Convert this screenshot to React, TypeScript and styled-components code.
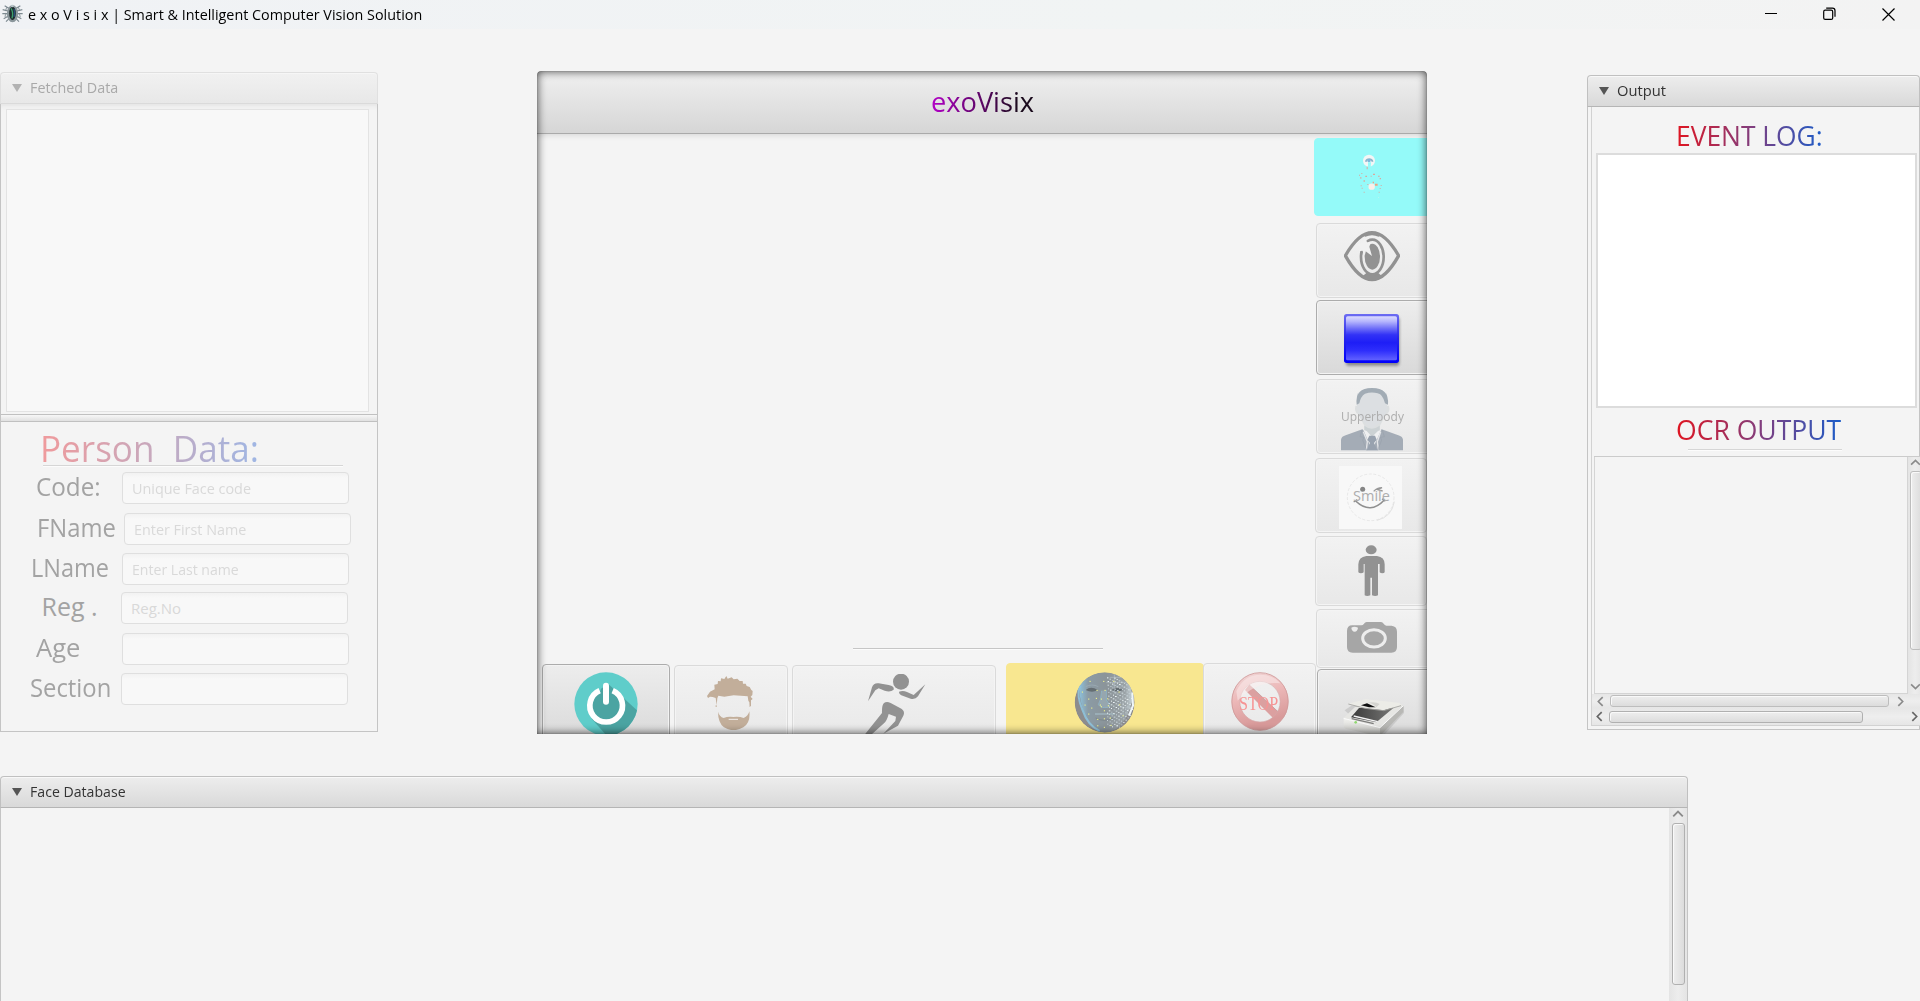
import React, { useLayoutEffect, useRef, useState } from "react";
import styled, { createGlobalStyle, css } from "styled-components";

const Global = createGlobalStyle`
  * { box-sizing: border-box; }
  body {
    margin: 0;
    background: #f4f4f4;
    overflow: hidden;
    font-family: "Open Sans", "Noto Sans", sans-serif;
    color: #333;
  }
  svg { display: block; flex: none; }
`;

/* ---------- text helpers ---------- */

const FitBox = styled.span<{ $width: number }>`
  display: block;
  flex: none;
  width: ${(p) => p.$width}px;
  white-space: pre;
`;
const FitInner = styled.span<{ $gradient?: string }>`
  display: inline-block;
  transform-origin: 0 50%;
  ${(p) =>
    p.$gradient &&
    css`
      background: ${p.$gradient};
      background-clip: text;
      -webkit-background-clip: text;
      color: transparent;
    `}
`;

/* Condenses a label horizontally so that it fills the given width. */
function Fit({ width, gradient, children }: { width: number; gradient?: string; children: string }) {
  const ref = useRef<HTMLSpanElement>(null);
  const [scale, setScale] = useState(1);
  useLayoutEffect(() => {
    if (ref.current) setScale(width / ref.current.offsetWidth);
  }, [width, children]);
  return (
    <FitBox $width={width}>
      <FitInner ref={ref} $gradient={gradient} style={{ transform: `scaleX(${scale})` }}>
        {children}
      </FitInner>
    </FitBox>
  );
}

/* ---------- window ---------- */

const Window = styled.div`
  display: flex;
  flex-direction: column;
  width: 1920px;
  height: 1001px;
  overflow: hidden;
  background: #f4f4f4;
`;
const TitleBar = styled.header`
  display: flex;
  align-items: center;
  flex: none;
  height: 29px;
  padding-left: 2px;
  background: linear-gradient(90deg, #f0f2f5, #f1f4f4 60%, #f3f3f3);
  color: #000;
  font-size: 15px;
  line-height: 28px;
`;
const TitleText = styled.div`
  margin: 0 auto 0 5px;
  padding-bottom: 2px;
`;
const Controls = styled.div`
  display: flex;
  gap: 46px;
  padding: 0 25px 1px 0;
`;
const Body = styled.main`
  display: flex;
  flex-direction: column;
  flex: 1;
`;
const Upper = styled.div`
  display: flex;
  align-items: flex-start;
  height: 747px;
`;

/* ---------- titled panes ---------- */

const PaneHead = styled.div<{ $muted?: boolean }>`
  display: flex;
  align-items: center;
  gap: 8.5px;
  flex: none;
  height: 32px;
  padding: 0 0 1px 10.5px;
  border: 1px solid ${(p) => (p.$muted ? "#e0e0e0" : "#c0c0c0")};
  border-bottom-color: ${(p) => (p.$muted ? "#dadada" : "#b5b5b5")};
  border-radius: 4px 4px 0 0;
  background: ${(p) =>
    p.$muted ? "linear-gradient(#f1f1f1, #e8e8e8)" : "linear-gradient(#ededed, #d9d9d9)"};
  box-shadow: inset 0 1px 0 ${(p) => (p.$muted ? "#f6f6f6" : "#f8f8f8")};
  color: ${(p) => (p.$muted ? "#a9a9a9" : "#333")};
  font-size: 15px;
  line-height: 29px;
`;
const Arrow = styled.i<{ $muted?: boolean }>`
  width: 0;
  height: 0;
  border: 5.5px solid transparent;
  border-top: 8px solid ${(p) => (p.$muted ? "#b2b2b2" : "#555")};
  border-bottom: 0;
`;

const DataPane = styled.section`
  display: flex;
  flex-direction: column;
  flex: none;
  width: 378px;
  height: 660px;
  margin-top: 43px;
`;
const DataBody = styled.div`
  flex: 1;
  border: 1px solid #c4c4c4;
  border-top: 0;
  box-shadow: inset 0 6px 5px -4px #e4e4e4;
`;
const FaceList = styled.div`
  width: 363px;
  height: 303px;
  margin: 5px 0 2px 5px;
  border: 1px solid #e3e3e3;
  background: #f8f8f8;
`;
const Divider = styled.div`
  height: 8px;
  border: solid #c0c0c0;
  border-width: 1px 0;
  background: linear-gradient(#f7f7f7, #e0e0e0);
`;
const PersonTitle = styled.h2`
  margin: 6px 0 0 39px;
  height: 37px;
  font-size: 37px;
  font-weight: 400;
  line-height: 40px;
`;
const Rule = styled.hr<{ $width: number; $left: number; $top?: number; $dark?: boolean }>`
  flex: none;
  width: ${(p) => p.$width}px;
  height: 2px;
  margin: ${(p) => p.$top ?? 0}px 0 0 ${(p) => p.$left}px;
  border: 0;
  border-top: 1px solid ${(p) => (p.$dark ? "#c6c6c6" : "#d6d6d6")};
  border-bottom: 1px solid #fcfcfc;
`;
const Row = styled.label<{ $top: number; $left: number }>`
  display: flex;
  height: 32px;
  margin: ${(p) => p.$top}px 0 0 ${(p) => p.$left}px;
`;
const RowLabel = styled.span<{ $width: number }>`
  flex: none;
  width: ${(p) => p.$width}px;
  color: #a3a3a3;
  font-size: 25px;
  line-height: 29px;
`;
const Field = styled.div`
  width: 227px;
  height: 32px;
  padding-left: 9px;
  border: 1px solid #dfdfdf;
  border-radius: 4px;
  background: linear-gradient(#f2f2f2, #f8f8f8 5px);
  color: #d9d9d9;
  font-size: 15px;
  line-height: 31px;
`;

/* ---------- camera pane ---------- */

const CameraPane = styled.section`
  position: relative;
  display: flex;
  flex-direction: column;
  flex: none;
  width: 890px;
  height: 663px;
  margin: 42px 0 0 159px;
  border-radius: 4px 4px 0 0;
  overflow: hidden;
  &::after {
    content: "";
    position: absolute;
    inset: 0;
    border-radius: 4px 4px 0 0;
    box-shadow: inset 0 0 10px rgba(0, 0, 0, 0.75), inset 0 0 1px rgba(0, 0, 0, 0.6);
    pointer-events: none;
  }
`;
const CameraHead = styled.div`
  flex: none;
  display: flex;
  justify-content: center;
  height: 63px;
  padding-left: 1px;
  border-bottom: 1px solid #aaa;
  background: linear-gradient(#f0f0f0, #d6d6d6);
  font-size: 28px;
  line-height: 61px;
`;
const CameraBody = styled.div`
  display: flex;
  flex: 1;
  box-shadow: inset 0 6px 5px -4px #dcdcdc;
`;
const Stage = styled.div`
  display: flex;
  flex-direction: column;
  flex: none;
  width: 777px;
`;
const Preview = styled.div`
  height: 514px;
`;
const BottomBar = styled.div`
  display: flex;
  align-items: flex-start;
  width: 779px;
  height: 71px;
  margin-top: 13px;
  overflow: hidden;
`;
const SideBar = styled.div`
  display: flex;
  flex-direction: column;
  width: 113px;
  overflow: hidden;
`;

type Kind = "on" | "off" | "cyan" | "yellow";
const kinds: Record<Kind, ReturnType<typeof css>> = {
  on: css`
    border: 1px solid #acacac;
    background: linear-gradient(#ededed, #d9d9d9);
    box-shadow: inset 0 0 0 1px #f3f3f3;
  `,
  off: css`
    border: 1px solid #dadada;
    background: linear-gradient(#f2f2f2, #e8e8e8);
    box-shadow: inset 0 0 0 1px #f4f4f4;
  `,
  cyan: css`
    border: 1px solid #94faf9;
    background: #94faf9;
  `,
  yellow: css`
    border: 1px solid #f8e790;
    background: #f8e790;
  `,
};
const ToolButton = styled.button<{
  $kind: Kind;
  $w: number;
  $h: number;
  $mt?: number;
  $ml?: number;
  $px: number;
  $py: number;
}>`
  position: relative;
  display: flex;
  align-items: flex-start;
  flex: none;
  width: ${(p) => p.$w}px;
  height: ${(p) => p.$h}px;
  margin: ${(p) => p.$mt ?? 0}px 0 0 ${(p) => p.$ml ?? 0}px;
  padding: ${(p) => p.$py - 1}px 0 0 ${(p) => p.$px - 1}px;
  border-radius: 4px;
  font-family: inherit;
  ${(p) => kinds[p.$kind]}
`;
const Caption = styled.span<{ $x: number; $y: number; $size: number; $color: string; $serif?: boolean }>`
  position: absolute;
  left: ${(p) => p.$x}px;
  top: ${(p) => p.$y}px;
  color: ${(p) => p.$color};
  font-family: ${(p) => (p.$serif ? '"Liberation Serif", serif' : "inherit")};
  font-size: ${(p) => p.$size}px;
  line-height: 20px;
`;

/* ---------- output pane ---------- */

const OutputPane = styled.section`
  flex: none;
  display: flex;
  flex-direction: column;
  width: 333px;
  height: 655px;
  margin: 46px 0 0 160px;
`;
const OutputFrame = styled.div`
  flex: 1;
  padding: 0 0 3px 3px;
  border: solid #c4c4c4;
  border-width: 0 1px 1px 1px;
`;
const OutputBody = styled.div`
  display: flex;
  flex-direction: column;
  height: 100%;
  margin-right: -1px;
  border: solid #d2d2d2;
  border-width: 0 0 1px 1px;
`;
const OutTitle = styled.h3<{ $top: number }>`
  flex: none;
  height: 36px;
  margin: ${(p) => p.$top}px 0 0 84px;
  font-size: 28px;
  font-weight: 400;
  line-height: 36px;
`;
const Log = styled.div`
  flex: none;
  width: 321px;
  height: 255px;
  margin-left: 4px;
  border: 2px solid #dcdcdc;
  background: #fff;
`;
const OcrBox = styled.div`
  display: flex;
  flex: none;
  height: 238px;
  margin: 5px 0 0 2px;
  border-top: 1px solid #cbcbcb;
`;
const OcrText = styled.div`
  flex: none;
  width: 314px;
  border: 1px solid #d4d4d4;
  border-top: 0;
`;
const VBar = styled.div<{ $w: number }>`
  display: flex;
  flex: none;
  flex-direction: column;
  align-items: center;
  width: ${(p) => p.$w}px;
  padding-bottom: 2px;
  overflow: hidden;
  background: linear-gradient(90deg, #e4e4e4, #ededed 50%, #e4e4e4);
`;
const HBar = styled.div<{ $h: number; $pl: number }>`
  display: flex;
  flex: none;
  align-items: center;
  height: ${(p) => p.$h}px;
  padding-left: ${(p) => p.$pl}px;
  background: linear-gradient(#e6e6e6, #eee 50%, #e6e6e6);
`;
const Spring = styled.i`
  flex: 1;
`;
const Gap = styled.i<{ $size: number }>`
  width: ${(p) => p.$size}px;
`;
const Thumb = styled.div<{ $w: number; $h: number; $ml?: number; $mt?: number; $vertical?: boolean; $soft?: boolean }>`
  flex: none;
  width: ${(p) => p.$w}px;
  height: ${(p) => p.$h}px;
  margin: ${(p) => p.$mt ?? 0}px 0 0 ${(p) => p.$ml ?? 0}px;
  border: 1px solid ${(p) => (p.$soft ? "#bdbdbd" : "#b0b0b0")};
  border-radius: 3px;
  background: linear-gradient(${(p) => (p.$vertical ? "90deg" : "180deg")}, #eee, #dcdcdc);
  box-shadow: inset 1px 1px 0 #f9f9f9;
`;

/* ---------- database pane ---------- */

const DatabasePane = styled.section`
  display: flex;
  flex-direction: column;
  width: 1688px;
  height: 225px;
`;
const DatabaseBody = styled.div`
  display: flex;
  justify-content: flex-end;
  flex: 1;
  border: solid #c4c4c4;
  border-width: 0 1px;
`;

/* ---------- icons ---------- */

const turn = { up: 0, right: 90, down: 180, left: 270 };
const Chevron = ({ dir, size = 11, color = "#8a8a8a" }: { dir: keyof typeof turn; size?: number; color?: string }) => (
  <svg width={size} height={size} viewBox="0 0 10 10">
    <path d="M1 7 5 3l4 4" fill="none" stroke={color} strokeWidth="1.5" transform={`rotate(${turn[dir]} 5 5)`} />
  </svg>
);

const BeetleIcon = () => (
  <svg width="21" height="26" viewBox="0 -3 63 78">
    <g stroke="#7d8a91" strokeWidth="3.500" fill="none">
      <path d="M20 16 8 8M18 24 2 20M18 32H1M18 40 5 47M22 46 12 56M43 16l12-8M45 24l16-4M45 32h17M45 40l13 7M41 46l10 10" />
      <path d="M15 12 10 24M48 12l6 12M12 30 9 42M51 30l4 12" opacity=".7" />
    </g>
    <ellipse cx="31.500" cy="32" rx="17" ry="26" fill="#8b979c" />
    <ellipse cx="31.500" cy="31" rx="10" ry="20" fill="#1d2b2c" />
    <path d="M27 16q8 12 3 30" stroke="#3da06e" strokeWidth="4" fill="none" />
    <path d="M36 18q4 12 0 24" stroke="#27507a" strokeWidth="4" fill="none" />
    <circle cx="31" cy="9" r="4" fill="#b8c4c8" />
  </svg>
);

const MinimizeIcon = () => (
  <svg width="14" height="14" viewBox="0 0 14 14">
    <path d="M2 6.500h12" stroke="#000" />
  </svg>
);
const RestoreIcon = () => (
  <svg width="13" height="14" viewBox="0 0 13 14">
    <g fill="none" stroke="#000" strokeWidth="1.200">
      <rect x="0.700" y="3.200" width="9" height="9.200" rx="1.500" />
      <path d="M3.200 1.200h6.300q2.500 0 2.500 2.500v6" />
    </g>
  </svg>
);
const CloseIcon = () => (
  <svg width="13" height="14" viewBox="0 0 13 14">
    <path d="M.5 1.500l12 12M12.500 1.500l-12 12" stroke="#000" strokeWidth="1.200" />
  </svg>
);

const LocateIcon = () => (
  <svg width="26" height="46" viewBox="172 280 78 138">
    <circle cx="208" cy="303" r="18" fill="#f4f6f6" />
    <path d="M198 306a11 11 0 0 1 21 0" fill="none" stroke="#8fb6cc" strokeWidth="5" />
    <circle cx="208" cy="303" r="5" fill="#7db7dc" />
    <path d="M205 308h9l-1 14h-8z" fill="#94faf9" />
    <g fill="#dba79c">
      <path d="M201 321h3v8h-3zM178 345h3v3h-3zM185 340h3v3h-3zM182 352h3v5h-3zM192 361h3v6h-3zM197 348h5v4h-5zM213 348h3v3h-3zM220 342h6v4h-6zM235 348h5v3h-5zM240 355h4v4h-4zM183 377h3v3h-3zM186 384h3v3h-3zM192 396h3v3h-3zM237 396h3v3h-3zM243 376h3v3h-3zM240 385h3v3h-3zM203 373h3v3h-3z" />
      <path d="M219 366h4v5h-4zM226 372h8v6h-8z" fill="#f0a080" />
    </g>
    <circle cx="216" cy="381" r="9.500" fill="#fbefe9" />
    <path d="M235 412h3v3h-3z" fill="#b5f5f2" />
  </svg>
);

const EyeIcon = () => (
  <svg width="56" height="51" viewBox="132 513 168 153">
    <path
      d="M136 587Q176 518 216 518T296 587Q256 659 216 659T136 587Z"
      fill="none"
      stroke="#929292"
      strokeWidth="10"
      strokeLinejoin="round"
    />
    <path d="M186 524q30-18 60 0l-10 6q-20-9-40 0zM184 652q32 20 66 0l-16-14q-17 10-34 0z" fill="#929292" />
    <ellipse cx="217" cy="591" rx="34" ry="52" fill="none" stroke="#929292" strokeWidth="8" />
    <ellipse cx="217" cy="590" rx="23" ry="39" fill="#929292" />
    <path d="M196 532l5 15 12-1-5 14 8 28-19-14-2 10-8-12-10 2 4-11-8-12 13-2z" fill="#f1f1f1" />
  </svg>
);

const BlueIcon = () => (
  <svg width="59" height="56" viewBox="129 759 177 168">
    <defs>
      <linearGradient id="blueFill" x1="0" y1="0" x2="0" y2="1">
        <stop offset="0" stopColor="#dcdcff" />
        <stop offset="0.120" stopColor="#b4b4fd" />
        <stop offset="0.280" stopColor="#6c6cf8" />
        <stop offset="0.420" stopColor="#3232f6" />
        <stop offset="0.600" stopColor="#1e1ef6" />
        <stop offset="0.780" stopColor="#2e2efc" />
        <stop offset="1" stopColor="#6262ff" />
      </linearGradient>
      <linearGradient id="blueEdge" x1="0" y1="0" x2="0" y2="1">
        <stop offset="0" stopColor="#6c6cf2" />
        <stop offset="0.500" stopColor="#2424ea" />
        <stop offset="1" stopColor="#0000fc" />
      </linearGradient>
      <filter id="blueShade" x="-10%" y="-10%" width="130%" height="130%">
        <feGaussianBlur stdDeviation="4" />
      </filter>
    </defs>
    <rect x="138" y="772" width="160" height="145" rx="8" fill="#888" filter="url(#blueShade)" />
    <rect x="132" y="762" width="165" height="147" rx="8" fill="url(#blueEdge)" />
    <rect x="138" y="769" width="153" height="132" rx="5" fill="url(#blueFill)" />
  </svg>
);

const SuitIcon = () => (
  <svg width="62" height="63" viewBox="123 53 186 189">
    <path d="M166 106q-4 20 9 26l18 34v16l23 18 24-18v-16l18-34q14-6 9-26z" fill="#dcdfe0" />
    <path d="M171 70q45-34 90 0v40q-8 44-44 64-38-18-46-64z" fill="#dcdfe2" />
    <path d="M193 166q22 18 46 0v15l-23 18-23-18z" fill="#ccd2d4" />
    <path d="M170 103q-6-50 46-50t48 50l-9-4q-6-26-22-30-18-6-38 1-13 8-17 29z" fill="#a2acb5" />
    <path d="M123 240v-32q2-10 14-13l50-18 29 22 29-22 50 18q12 3 14 13v32z" fill="#a4acb6" />
    <path d="M190 178l26 62 28-62-10 4-18 17-16-17z" fill="#eff0f1" />
    <path d="M208 196h17l5 12-8 10 10 22h-32l10-22-8-10z" fill="#98a2af" />
    <path d="M190 184l12 30-3 24M242 184l-10 30 3 24" stroke="#e3e5e8" strokeWidth="4" fill="none" />
    <path d="M186 179l-6 20 12 2-4 8 12 31M247 179l6 20-12 2 4 8-12 31" stroke="#98a1ac" strokeWidth="2" fill="none" />
  </svg>
);

const SmileIcon = () => (
  <svg width="63" height="63" viewBox="117 288 189 189">
    <path d="M117 288h189v189H117z" fill="#f8f8f8" />
    <circle cx="212" cy="382" r="70" fill="#f8f8f8" stroke="#e0e0e0" strokeWidth="2" strokeDasharray="9 5" />
    <path d="M283 395q-8 46-52 56" stroke="#e2e2e2" strokeWidth="3" fill="none" />
    <path d="M167 393q44 42 86-3" stroke="#8f8f8f" strokeWidth="5" fill="none" />
    <path d="M161 396l11-7M246 386l10 8" stroke="#8f8f8f" strokeWidth="4" />
    <circle cx="188" cy="358" r="7.500" fill="#858585" />
    <path d="M221 364q10-11 25-11l-13 6 15 4" stroke="#999" strokeWidth="4" fill="none" />
  </svg>
);

const PersonIcon = () => (
  <svg width="27" height="51" viewBox="172 524 81 153">
    <ellipse cx="211.500" cy="538.500" rx="16.500" ry="13.500" fill="#929292" />
    <path
      d="M197 557h32q23 3 23 25v24q-2 3-7 3t-8-3v-25h-5v94q-8 4-18 0v-53h-5v53q-10 4-17 0v-94h-3v25q-3 3-8 3t-8-3v-24q1-22 24-25z"
      fill="#929292"
    />
  </svg>
);

const CameraIcon = () => (
  <svg width="50" height="31" viewBox="141 755 150 93">
    <path
      d="M141 782q0-17 16-17h27q5 0 8-5t8-5h43q5 0 8 5t8 6h16q16 2 16 18v46q0 17-17 17H158q-17 0-17-17z"
      fill="#a6a6a6"
    />
    <ellipse cx="222" cy="804" rx="34" ry="26" fill="#a6a6a6" stroke="#ededed" strokeWidth="9" />
    <path d="M154 772q9-6 20 0-2 12-10 12-9-1-10-12z" fill="#ededed" />
  </svg>
);

const ScannerIcon = () => (
  <svg width="61" height="42" viewBox="1088 206 183 126">
    <defs>
      <linearGradient id="bedFill" x1="0" y1="0" x2="1" y2="0">
        <stop offset="0" stopColor="#3a3a3a" />
        <stop offset="1" stopColor="#777775" />
      </linearGradient>
      <linearGradient id="frontFill" x1="0" y1="0" x2="0" y2="1">
        <stop offset="0" stopColor="#f2f2ef" />
        <stop offset="1" stopColor="#c4c4c1" />
      </linearGradient>
    </defs>
    <path d="M1093 240l20-14 158 2v20l-60 66-40 0z" fill="#bdbdbd" opacity=".6" />
    <path d="M1090 262l34-32 142-7 4 6-71 66z" fill="#e6e6e3" />
    <path d="M1112 261l24-28 104-1-52 44z" fill="url(#bedFill)" />
    <path d="M1120 257l72 17" stroke="#f4f4f4" strokeWidth="4" />
    <path d="M1114 265l66 15" stroke="#7c7c7a" strokeWidth="4" />
    <path d="M1104 220l50-13 102 10 8 7-54 16-56-6z" fill="#ecece7" />
    <path d="M1104 221l50 13 56 7 52-15" fill="none" stroke="#a2a29f" strokeWidth="2.500" />
    <path d="M1142 225l18-6 26 12-20 0z" fill="#111" />
    <path d="M1162 217q18 2 26 14l10-10q-12-8-36-4z" fill="#d4d4cf" />
    <path d="M1090 264v24q0 6 6 7l96 22q7 1 7-6v-20z" fill="url(#frontFill)" />
    <path d="M1199 292l70-67v20l-70 72z" fill="#b8b8b5" />
    <path d="M1090 264l109 28 70-66" fill="none" stroke="#fafafa" strokeWidth="3" />
    <circle cx="1126" cy="276" r="4" fill="#90d870" />
  </svg>
);

const PowerIcon = () => (
  <svg width="64" height="64" viewBox="131 126 192 192">
    <defs>
      <clipPath id="powerClip">
        <circle cx="227" cy="222" r="95" />
      </clipPath>
    </defs>
    <circle cx="227" cy="222" r="95" fill="#5fcdca" />
    <path d="M234 162l100 92v80h-90l-60-68 28-90z" fill="#4ba4a2" clipPath="url(#powerClip)" />
    <circle cx="227" cy="227" r="44" fill="#4ba4a2" />
    <path d="M208 182a49 49 0 1 0 39 0" fill="none" stroke="#fff" strokeWidth="17" />
    <path d="M227 167v48" stroke="#fff" strokeWidth="18" strokeLinecap="round" />
  </svg>
);

const BeardIcon = () => (
  <svg width="47" height="55" viewBox="528 138 141 165">
    <g fill="#c2ae9a">
      <path d="M528 201l9-13 14-7-1-14 10-2 1-9 8 1 1-9 10 2 6-9 4 8 12-4 6 6 11-2 7 7 9 0 1 8 8 0 3 7 9 3 5 9 4 3-1 12-5 5 6 7-5 4v16l-4 5-1-15-3-5-2-13-42-3-28 4-18-3-3 8-2 21-3-22-9-3-8-1-6 4z" />
      <path d="M554 229h3v5h-3zM561 248q4 15 17 19 12-5 29-3 18-2 31 3 14-6 17-20 4 34-18 48-30 17-58 0-18-14-18-47z" />
    </g>
    <path d="M593 271h28" stroke="#f2efec" strokeWidth="3" />
  </svg>
);

const RunnerIcon = () => (
  <svg width="62" height="64" viewBox="1002 131 186 192">
    <g fill="#929292">
      <circle cx="1113" cy="154" r="24" />
      <path d="M1014 213l12-42q5-14 20-12l30 5q18 4 15 14-10 9-27 3l-18-7-10 6z" />
      <path d="M1107 184q12-5 24 1l20 9 35-32-22 36q-8 10-22 7l-22-8q-14-5-13-13z" />
      <path d="M1062 218q8-6 20 0l28 15q17 8 10 23l-16 30-44 24 36-38 2-13-22-8q-5 20-14 28l-48 43-18 1 60-75q-1-24 6-30z" />
    </g>
  </svg>
);

/* Scattered scan points that cover the right half of the face mesh. */
const meshDots = Array.from({ length: 210 }, (_, i) => ({
  x: 382 + ((i * 37) % 76),
  y: 140 + ((i * 53) % 150),
})).filter((d) => (d.x - 375) ** 2 + (d.y - 216) ** 2 < 7400);
const markDots = [
  [331, 152], [372, 152], [402, 152], [308, 184], [352, 179], [376, 179], [327, 205], [365, 205], [384, 204],
  [350, 203], [316, 223], [362, 223], [374, 240], [336, 232], [365, 228], [386, 225], [327, 250], [354, 266],
  [374, 264], [392, 262], [354, 285], [374, 290], [394, 284], [420, 222], [430, 255], [418, 184],
];
const FaceIcon = () => (
  <svg width="61" height="61" viewBox="283 124 183 183">
    <defs>
      <clipPath id="faceClip">
        <circle cx="375" cy="215.500" r="90" />
      </clipPath>
      <linearGradient id="faceFill">
        <stop offset="0" stopColor="#8dc0da" />
        <stop offset="0.160" stopColor="#8b9ba5" />
        <stop offset="0.500" stopColor="#8b9499" />
        <stop offset="0.850" stopColor="#9aa2a6" />
        <stop offset="1" stopColor="#c4d0d5" />
      </linearGradient>
    </defs>
    <g clipPath="url(#faceClip)">
      <circle cx="375" cy="215.500" r="90" fill="#8c8c8e" />
      <path d="M300 160q20-36 75-36t78 40l6 40q-6 30-22 60-26 42-62 42-44-8-64-68-14-38-11-78z" fill="url(#faceFill)" />
      <path d="M300 165q-10 30 8 72 16 48 52 64" fill="none" stroke="#8ec9e6" strokeWidth="6" opacity=".8" />
      <path d="M366 180q-2 30-10 42 8 12 30 8l4-8-10-14V178" fill="#96a6ae" stroke="#8eb4c8" strokeWidth="2.500" />
      <path d="M318 178q16-14 36 0-16 10-36 0zM396 178q16-14 34 0-16 8-34 0z" fill="#646d72" />
      <path d="M318 168q18-10 38 0M394 168q18-10 36 0" stroke="#a0b0b9" strokeWidth="2" fill="none" />
      <path d="M346 250h60" stroke="#b0ccd8" strokeWidth="2.500" />
      <path d="M348 262q26 14 52 0" stroke="#7d878c" strokeWidth="3" fill="none" />
      <path d="M390 140h50M380 156h60M404 128v60M420 230h40M430 190v70" stroke="#b4bec3" strokeWidth="2" />
      {meshDots.map((d, i) => (
        <rect key={i} x={d.x} y={d.y} width="3" height="3" fill={i % 3 ? "#c4d0d5" : "#eef5f7"} />
      ))}
      <path d="M458 185l2 40-12 30" stroke="#eef6f9" strokeWidth="6" fill="none" />
      {markDots.map(([x, y]) => (
        <rect key={`${x}-${y}`} x={x - 1.5} y={y - 1.5} width="3.500" height="3.500" fill="#eef08a" />
      ))}
    </g>
  </svg>
);

const StopIcon = () => (
  <svg width="58" height="59" viewBox="752 126 174 177">
    <defs>
      <linearGradient id="stopFill" x1="0" y1="0" x2="0.300" y2="1">
        <stop offset="0" stopColor="#f0d4d4" />
        <stop offset="0.450" stopColor="#ecb8b8" />
        <stop offset="1" stopColor="#d89a9a" />
      </linearGradient>
    </defs>
    <path d="M806 164l90 84-14 20-88-88z" fill="#dba0a0" />
    <path d="M806 164l90 84" stroke="#bf8a8a" strokeWidth="2" />
    <ellipse cx="839" cy="214.500" rx="73" ry="74" fill="none" stroke="url(#stopFill)" strokeWidth="25" />
    <ellipse cx="839" cy="214.500" rx="84.500" ry="86.500" fill="none" stroke="#cf9a9a" strokeWidth="2.500" />
    <ellipse cx="839" cy="215" rx="60.500" ry="61" fill="none" stroke="#d4a8a8" strokeWidth="2" />
    <path d="M768 184q22-50 72-50 38 0 60 26-70-8-128 52z" fill="#fbeeee" opacity=".5" />
  </svg>
);

/* ---------- page ---------- */

const fields = [
  { label: "Code:", fit: 65, top: 5, left: 35, gap: 86, hint: "Unique Face code", hintFit: 119 },
  { label: "FName", fit: 79, top: 9, left: 36, gap: 86.5, hint: "Enter First Name", hintFit: 112 },
  { label: "LName", fit: 78, top: 8, left: 30, gap: 91, hint: "Enter Last name", hintFit: 107 },
  { label: "Reg .", fit: 56, top: 7, left: 40.5, gap: 79.5, hint: "Reg.No", hintFit: 50 },
  { label: "Age", fit: 44, top: 9, left: 35, gap: 86, hint: "", hintFit: 0 },
  { label: "Section", fit: 81, top: 8, left: 29, gap: 91, hint: "", hintFit: 0 },
];

export default function App() {
  return (
    <Window>
      <Global />
      <TitleBar>
        <BeetleIcon />
        <TitleText>
          <Fit width={394}>e x o V i s i x | Smart &amp; Intelligent Computer Vision Solution</Fit>
        </TitleText>
        <Controls>
          <MinimizeIcon />
          <RestoreIcon />
          <CloseIcon />
        </Controls>
      </TitleBar>
      <Body>
        <Upper>
          <DataPane>
            <PaneHead $muted>
              <Arrow $muted />
              <Fit width={88}>Fetched Data</Fit>
            </PaneHead>
            <DataBody>
              <FaceList />
              <Divider />
              <PersonTitle>
                <Fit width={219} gradient="linear-gradient(90deg, #f09a9c, #c8a8bc 50%, #9fb6e4)">
                  {"Person  Data:"}
                </Fit>
              </PersonTitle>
              <Rule $width={300} $left={42} />
              {fields.map((f) => (
                <Row key={f.label} $top={f.top} $left={f.left}>
                  <RowLabel $width={f.gap}>
                    <Fit width={f.fit}>{f.label}</Fit>
                  </RowLabel>
                  <Field>{f.hint && <Fit width={f.hintFit}>{f.hint}</Fit>}</Field>
                </Row>
              ))}
            </DataBody>
          </DataPane>

          <CameraPane>
            <CameraHead>
              <Fit width={103} gradient="linear-gradient(90deg, #b400c8, #1a0a1c 85%)">
                exoVisix
              </Fit>
            </CameraHead>
            <CameraBody>
              <Stage>
                <Preview />
                <Rule $width={250} $left={316} $dark />
                <BottomBar>
                  <ToolButton $kind="on" $w={128} $h={80} $mt={1} $ml={5} $px={31.5} $py={8}>
                    <PowerIcon />
                  </ToolButton>
                  <ToolButton $kind="off" $w={114} $h={80} $mt={2} $ml={4} $px={33} $py={10}>
                    <BeardIcon />
                  </ToolButton>
                  <ToolButton $kind="off" $w={204} $h={80} $mt={2} $ml={4} $px={72} $py={9}>
                    <RunnerIcon />
                  </ToolButton>
                  <ToolButton $kind="yellow" $w={198} $h={80} $ml={10} $px={68} $py={8.5}>
                    <FaceIcon />
                  </ToolButton>
                  <ToolButton $kind="off" $w={113} $h={80} $ml={-1} $px={28} $py={9}>
                    <StopIcon />
                    <Caption $x={35} $y={30} $size={19} $color="#f69494" $serif>
                      <Fit width={39}>STOP</Fit>
                    </Caption>
                  </ToolButton>
                </BottomBar>
              </Stage>
              <SideBar>
                <ToolButton $kind="cyan" $w={120} $h={78} $mt={4} $px={43} $py={15}>
                  <LocateIcon />
                </ToolButton>
                <ToolButton $kind="off" $w={120} $h={75} $mt={7} $ml={2} $px={28} $py={8}>
                  <EyeIcon />
                </ToolButton>
                <ToolButton $kind="on" $w={120} $h={75} $mt={2} $ml={2} $px={27} $py={13}>
                  <BlueIcon />
                </ToolButton>
                <ToolButton $kind="off" $w={120} $h={75} $mt={4} $ml={2} $px={25} $py={9}>
                  <SuitIcon />
                  <Caption $x={24} $y={26} $size={13.5} $color="#adadad">
                    <Fit width={63}>Upperbody</Fit>
                  </Caption>
                </ToolButton>
                <ToolButton $kind="off" $w={112} $h={75} $mt={4} $ml={1} $px={24} $py={8}>
                  <SmileIcon />
                  <Caption $x={37} $y={27} $size={14.5} $color="#adadad">
                    <Fit width={37}>Smile</Fit>
                  </Caption>
                </ToolButton>
                <ToolButton $kind="off" $w={112} $h={70} $mt={3} $ml={1} $px={42.5} $py={9}>
                  <PersonIcon />
                </ToolButton>
                <ToolButton $kind="off" $w={120} $h={59} $mt={3} $ml={2} $px={31} $py={13}>
                  <CameraIcon />
                </ToolButton>
                <ToolButton $kind="on" $w={120} $h={80} $mt={1} $ml={3} $px={26} $py={30}>
                  <ScannerIcon />
                </ToolButton>
              </SideBar>
            </CameraBody>
          </CameraPane>

          <OutputPane>
            <PaneHead>
              <Arrow />
              <Fit width={49}>Output</Fit>
            </PaneHead>
            <OutputFrame>
              <OutputBody>
                <OutTitle $top={10}>
                  <Fit width={147} gradient="linear-gradient(90deg, #e01420, #7a4084 55%, #1c5cc8)">
                    EVENT LOG:
                  </Fit>
                </OutTitle>
                <Log />
                <OutTitle $top={3}>
                  <Fit width={165} gradient="linear-gradient(90deg, #e01420, #7a4084 55%, #1c5cc8)">
                    OCR OUTPUT
                  </Fit>
                </OutTitle>
                <Rule $width={154} $left={96} $top={2} />
                <OcrBox>
                  <OcrText />
                  <VBar $w={14}>
                    <Chevron dir="up" />
                    <Thumb $w={12} $h={179} $mt={3} $ml={1} $vertical $soft />
                    <Spring />
                    <Chevron dir="down" />
                  </VBar>
                </OcrBox>
                <HBar $h={14} $pl={3}>
                  <Chevron dir="left" />
                  <Thumb $w={279} $h={12} $ml={4} $soft />
                  <Gap $size={6} />
                  <Chevron dir="right" />
                </HBar>
                <HBar $h={17} $pl={2}>
                  <Chevron dir="left" color="#666" />
                  <Thumb $w={254} $h={12} $ml={4} />
                  <Spring />
                  <Chevron dir="right" color="#666" />
                </HBar>
              </OutputBody>
            </OutputFrame>
          </OutputPane>
        </Upper>

        <DatabasePane>
          <PaneHead>
            <Arrow />
            <Fit width={96}>Face Database</Fit>
          </PaneHead>
          <DatabaseBody>
            <VBar $w={18}>
              <Chevron dir="up" size={12} />
              <Thumb $w={13} $h={162} $mt={3} $vertical />
            </VBar>
          </DatabaseBody>
        </DatabasePane>
      </Body>
    </Window>
  );
}
